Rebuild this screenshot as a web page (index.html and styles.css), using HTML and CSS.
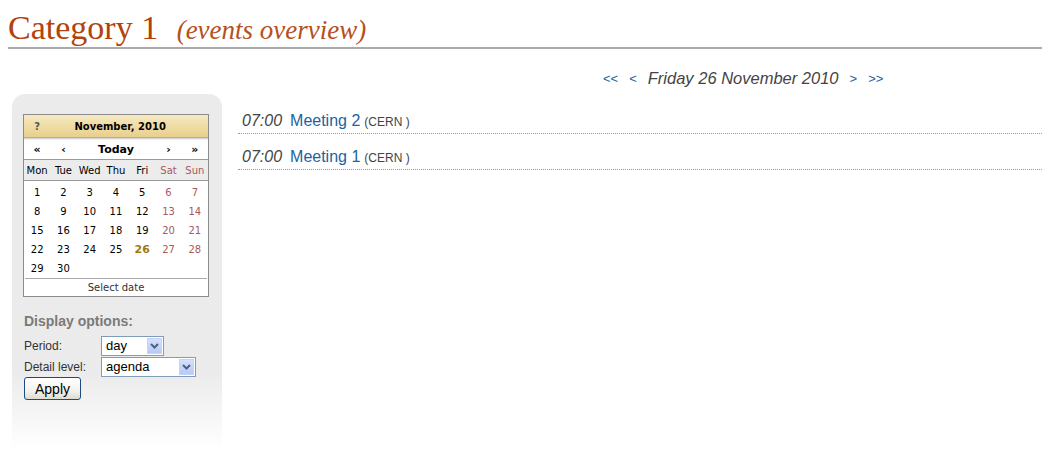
FILE: index.html
```html
<!DOCTYPE html>
<html>
<head>
<meta charset="utf-8">
<link rel="stylesheet" href="styles.css">
</head>
<body>
<div class="page-header">
  <h1 class="page-title">Category 1 <span class="subtitle">(events overview)</span></h1>
</div>

<div class="datenav">
  <a href="#" class="navlink">&lt;&lt;</a>
  <a href="#" class="navlink">&lt;</a>
  <span class="curdate">Friday 26 November 2010</span>
  <a href="#" class="navlink">&gt;</a>
  <a href="#" class="navlink">&gt;&gt;</a>
</div>

<div class="main">
  <div class="sidebar">
    <div class="calendar">
      <table class="cal">
        <thead>
          <tr class="cal-title">
            <td class="help">?</td>
            <td colspan="6" class="month">November, 2010</td>
          </tr>
          <tr class="cal-shadow"><td colspan="7"></td></tr>
          <tr class="cal-nav">
            <td>&laquo;</td>
            <td>&lsaquo;</td>
            <td colspan="3" class="today">Today</td>
            <td>&rsaquo;</td>
            <td>&raquo;</td>
          </tr>
          <tr class="cal-days">
            <td>Mon</td><td>Tue</td><td>Wed</td><td>Thu</td><td>Fri</td><td class="we">Sat</td><td class="we">Sun</td>
          </tr>
        </thead>
        <tbody>
          <tr class="sp"><td colspan="7"></td></tr>
          <tr><td>1</td><td>2</td><td>3</td><td>4</td><td>5</td><td class="we">6</td><td class="we">7</td></tr>
          <tr><td>8</td><td>9</td><td>10</td><td>11</td><td>12</td><td class="we">13</td><td class="we">14</td></tr>
          <tr><td>15</td><td>16</td><td>17</td><td>18</td><td>19</td><td class="we">20</td><td class="we">21</td></tr>
          <tr><td>22</td><td>23</td><td>24</td><td>25</td><td class="cur">26</td><td class="we">27</td><td class="we">28</td></tr>
          <tr><td>29</td><td>30</td><td></td><td></td><td></td><td></td><td></td></tr>
        </tbody>
        <tfoot>
          <tr class="cal-foot"><td colspan="7"><div class="foot-inner">Select date</div></td></tr>
        </tfoot>
      </table>
    </div>

    <div class="options">
      <div class="opt-title">Display options:</div>
      <div class="opt-row">
        <span class="opt-label">Period:</span>
        <span class="sel sel-period">
          <select><option>day</option><option>week</option><option>month</option></select>
          <span class="sel-arrow"><svg width="9" height="6" viewBox="0 0 9 6"><path d="M1 1 L4.5 4.5 L8 1" fill="none" stroke="#4d6185" stroke-width="2"/></svg></span>
        </span>
      </div>
      <div class="opt-row">
        <span class="opt-label">Detail level:</span>
        <span class="sel sel-detail">
          <select><option>agenda</option><option>session</option><option>contribution</option></select>
          <span class="sel-arrow"><svg width="9" height="6" viewBox="0 0 9 6"><path d="M1 1 L4.5 4.5 L8 1" fill="none" stroke="#4d6185" stroke-width="2"/></svg></span>
        </span>
      </div>
      <button class="apply">Apply</button>
    </div>
  </div>

  <div class="content">
    <div class="event">
      <span class="time">07:00</span>
      <a href="#" class="ev-title">Meeting 2</a>
      <span class="loc">(CERN )</span>
    </div>
    <div class="event">
      <span class="time">07:00</span>
      <a href="#" class="ev-title">Meeting 1</a>
      <span class="loc">(CERN )</span>
    </div>
  </div>
</div>
</body>
</html>
```

FILE: styles.css
```css
html, body {
  background: #ffffff;
}
body {
  margin: 0 0 0 8px;
  font-family: "Liberation Sans", Arial, sans-serif;
  color: #333;
}
a { text-decoration: none; }

.page-header {
  border-bottom: 2px solid #aaaaaa;
  padding-top: 8px;
}
.page-title {
  margin: 0;
  font-family: "Liberation Serif", "Times New Roman", serif;
  font-weight: normal;
  font-size: 34px;
  line-height: 39px;
  color: #b3420a;
  height: 39px;
}
.subtitle {
  font-style: italic;
  font-size: 27px;
  margin-left: 10px;
  color: #b5501c;
}

.datenav {
  display: flex;
  align-items: center;
  gap: 11px;
  padding-left: 595px;
  margin-top: 19px;
  height: 20px;
  font-size: 16.5px;
}
.navlink {
  color: #1d63a0;
  font-size: 13px;
}
.curdate {
  font-style: italic;
  color: #444;
}

.main {
  display: flex;
  align-items: flex-start;
  margin-top: 6px;
}

.sidebar {
  margin-left: 4px;
  width: 210px;
  height: 356px;
  border-radius: 13px 13px 0 0;
  background: linear-gradient(to bottom, #ebebeb 0%, #ebebeb 78%, #ffffff 100%);
  padding: 20px 14px 0 11px;
  box-sizing: border-box;
}

.calendar {
  border: 1px solid #8c8c8c;
  background: #fff;
  width: 186px;
  box-sizing: border-box;
}
.cal {
  width: 100%;
  border-collapse: collapse;
  font-family: "DejaVu Sans", Tahoma, sans-serif;
  font-size: 10px;
  color: #000;
  table-layout: fixed;
}
.cal td {
  padding: 0;
  text-align: center;
}
.cal-title td {
  height: 22px;
  background: linear-gradient(to bottom, #f6e9c2 0%, #efdba2 55%, #e8cf8c 100%);
  font-weight: bold;
  font-size: 10px;
}
.cal-title .help { color: #555; }
.cal-title .month { text-align: center; padding-right: 18px; }
.cal-shadow td {
  height: 3px;
  background: linear-gradient(to bottom, #9a9a9a, #e0e0e0 60%, #ffffff);
}
.cal-nav td {
  height: 19px;
  font-weight: bold;
  font-size: 11px;
}
.cal-days td {
  height: 20px;
  background: #ececec;
  border-top: 1px solid #9a9a9a;
  border-bottom: 1px solid #9a9a9a;
  font-size: 10px;
}
.cal .we { color: #a8585e; }
.cal tbody tr td { height: 19px; }
.cal tbody tr.sp td { height: 2px; }
.cal .cur { color: #a0780e; font-weight: bold; font-size: 11px; }
.cal-foot td {
  padding: 0 1px;
}
.foot-inner {
  border-top: 1px solid #ababab;
  height: 17px;
  line-height: 18px;
  color: #333;
  font-size: 10px;
}

.options {
  padding-top: 16px;
  padding-left: 1px;
}
.opt-title {
  font-weight: bold;
  font-size: 14px;
  color: #7a7a7a;
  height: 20px;
  margin-bottom: 2px;
}
.opt-row {
  display: flex;
  align-items: center;
  height: 21px;
  font-size: 12px;
  color: #333;
}
.opt-label {
  width: 77px;
}
.sel {
  position: relative;
  display: inline-block;
}
.sel select {
  appearance: none;
  -webkit-appearance: none;
  border: 1px solid #7f9db9;
  border-radius: 0;
  background: #fff;
  height: 20px;
  font-family: "Liberation Sans", Arial, sans-serif;
  font-size: 13px;
  color: #000;
  padding: 0 0 0 4px;
  margin: 0;
  outline: none;
}
.sel-period select { width: 63px; }
.sel-detail select { width: 95px; }
.sel-arrow {
  position: absolute;
  right: 2px;
  top: 2px;
  width: 15px;
  height: 16px;
  box-sizing: border-box;
  border: 1px solid #c3d3fd;
  background: linear-gradient(to bottom, #d4e0fe, #b7caf6);
  display: flex;
  align-items: center;
  justify-content: center;
  pointer-events: none;
}

.apply {
  margin-top: 0;
  width: 57px;
  height: 23px;
  border: 1px solid #1c4a84;
  border-radius: 3px;
  background: linear-gradient(to bottom, #ffffff 0%, #f4f3ee 60%, #dedbd0 100%);
  font-family: "Liberation Sans", Arial, sans-serif;
  font-size: 14px;
  color: #000;
  padding: 0;
}

.content {
  flex: 1;
  margin-left: 16px;
  padding-top: 4px;
}
.event {
  border-bottom: 1px dotted #999;
  height: 36px;
  display: flex;
  align-items: flex-end;
  padding-left: 4px;
  box-sizing: border-box;
  padding-bottom: 3px;
}
.time {
  font-style: italic;
  color: #444;
  font-size: 16px;
  margin-right: 8px;
}
.ev-title {
  color: #1d63a0;
  font-size: 16px;
  margin-right: 4px;
}
.loc {
  font-size: 12px;
  color: #444;
  padding-bottom: 1px;
}
```
